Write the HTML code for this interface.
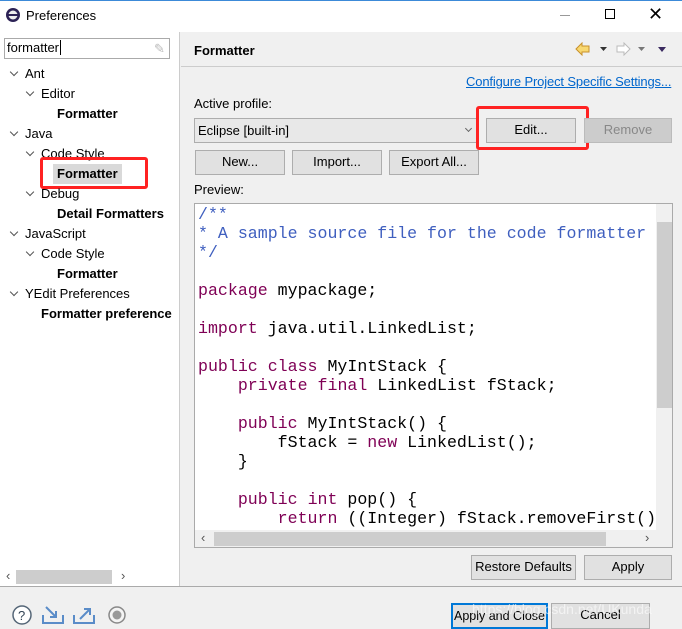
<!DOCTYPE html><html><head><style>
*{margin:0;padding:0;box-sizing:border-box}
html,body{width:682px;height:629px;overflow:hidden}
body{background:#f0f0f0;font-family:"Liberation Sans","Noto Sans CJK SC",sans-serif;font-size:13px;color:#000;position:relative}
.a{position:absolute}
.btn{position:absolute;background:#e1e1e1;border:1px solid #adadad;text-align:center;line-height:22px;font-size:13px;white-space:nowrap;overflow:hidden}
.t{position:absolute;font-size:13px;white-space:nowrap}
.b{font-weight:bold}
.chev{position:absolute;width:6px;height:6px;border-right:1.3px solid #555;border-bottom:1.3px solid #555;transform:rotate(45deg)}
pre{font-family:"Liberation Mono",monospace;font-size:16.6px;line-height:19px;color:#000}
.k{color:#7f0055}
.c{color:#3f5fbf}
</style></head><body>
<div class="a" style="left:0;top:0;width:682px;height:32px;background:#fff;border-top:1px solid #3c8ad8"></div>
<svg class="a" style="left:5px;top:7px" width="16" height="16"><circle cx="8" cy="8" r="7" fill="#2c2255"/><circle cx="8" cy="8" r="4.5" fill="#eee"/><rect x="3" y="7" width="10" height="2" fill="#2c2255"/></svg>
<div class="t" style="left:26px;top:8px">Preferences</div>
<div class="a" style="left:560px;top:15px;width:10px;height:1px;background:#999"></div>
<div class="a" style="left:605px;top:9px;width:10px;height:10px;border:1px solid #000"></div>
<div class="t" style="left:648px;top:4px;font-size:18px">✕</div>
<!-- left -->
<div class="a" style="left:0;top:32px;width:180px;height:555px;background:#fff;border-right:1px solid #ccc"></div>
<div class="a" style="left:4px;top:38px;width:166px;height:21px;border:1px solid #aaa;background:#fff"></div>
<div class="t" style="left:7px;top:40px">formatter<span style="border-left:1px solid #000;margin-left:1px"></span></div>
<div class="t" style="left:154px;top:41px;color:#bbb">✎</div>
<div class="chev" style="left:11px;top:69px"></div><div class="t" style="left:25px;top:66px">Ant</div>
<div class="chev" style="left:27px;top:89px"></div><div class="t" style="left:41px;top:86px">Editor</div>
<div class="t b" style="left:57px;top:106px">Formatter</div>
<div class="chev" style="left:11px;top:129px"></div><div class="t" style="left:25px;top:126px">Java</div>
<div class="chev" style="left:27px;top:149px"></div><div class="t" style="left:41px;top:146px">Code Style</div>
<div class="a" style="left:53px;top:164px;width:69px;height:20px;background:#d9d9d9"></div>
<div class="t b" style="left:57px;top:166px">Formatter</div>
<div class="a" style="left:40px;top:157px;width:108px;height:32px;border:3px solid #f22;border-radius:3px"></div>
<div class="chev" style="left:27px;top:189px"></div><div class="t" style="left:41px;top:186px">Debug</div>
<div class="t b" style="left:57px;top:206px">Detail Formatters</div>
<div class="chev" style="left:11px;top:229px"></div><div class="t" style="left:25px;top:226px">JavaScript</div>
<div class="chev" style="left:27px;top:249px"></div><div class="t" style="left:41px;top:246px">Code Style</div>
<div class="t b" style="left:57px;top:266px">Formatter</div>
<div class="chev" style="left:11px;top:289px"></div><div class="t" style="left:25px;top:286px">YEdit Preferences</div>
<div class="t b" style="left:41px;top:306px">Formatter preference</div>
<div class="a" style="left:16px;top:570px;width:96px;height:14px;background:#cdcdcd"></div>
<div class="t" style="left:6px;top:568px;color:#555">‹</div><div class="t" style="left:121px;top:568px;color:#555">›</div>
<!-- right header -->
<div class="a" style="left:181px;top:66px;width:501px;height:1px;background:#ccc"></div>
<div class="t b" style="left:194px;top:43px">Formatter</div>
<svg class="a" style="left:574px;top:42px" width="100" height="14"><path d="M2 7 L8 1 V4 H15 V10 H8 V13 Z" fill="#f8d870" stroke="#c8902a"/><path d="M26 5 h7 l-3.5 4z" fill="#333"/><path d="M56 7 L50 1 V4 H43 V10 H50 V13 Z" fill="#fff" stroke="#bbb"/><path d="M64 5 h7 l-3.5 4z" fill="#777"/><path d="M84 5 h8 l-4 5z" fill="#3a2a60"/></svg>
<div class="t" style="left:466px;top:74px;color:#0066cc;text-decoration:underline;letter-spacing:-0.15px">Configure Project Specific Settings...</div>
<div class="t" style="left:194px;top:96px">Active profile:</div>
<div class="a" style="left:194px;top:118px;width:285px;height:25px;border:1px solid #adadad;background:#e8e8e8"></div>
<div class="t" style="left:198px;top:123px">Eclipse [built-in]</div>
<div class="chev" style="left:466px;top:126px;width:5px;height:5px;border-color:#666"></div>
<div class="btn" style="left:486px;top:118px;width:90px;height:25px">Edit...</div>
<div class="a" style="left:476px;top:106px;width:113px;height:44px;border:3px solid #f22;border-radius:3px"></div>
<div class="btn" style="left:584px;top:118px;width:88px;height:25px;color:#888;background:#ccc;border-color:#bbb">Remove</div>
<div class="btn" style="left:195px;top:150px;width:90px;height:25px">New...</div>
<div class="btn" style="left:292px;top:150px;width:90px;height:25px">Import...</div>
<div class="btn" style="left:389px;top:150px;width:90px;height:25px">Export All...</div>
<div class="t" style="left:194px;top:182px">Preview:</div>
<!-- code -->
<div class="a" style="left:194px;top:203px;width:479px;height:345px;border:1px solid #aaa;background:#fff;overflow:hidden">
<pre class="a" style="left:3px;top:1px">
<span class="c">/**
* A sample source file for the code formatter
*/</span>

<span class="k">package</span> mypackage;

<span class="k">import</span> java.util.LinkedList;

<span class="k">public</span> <span class="k">class</span> MyIntStack {
    <span class="k">private</span> <span class="k">final</span> LinkedList fStack;

    <span class="k">public</span> MyIntStack() {
        fStack = <span class="k">new</span> LinkedList();
    }

    <span class="k">public</span> <span class="k">int</span> pop() {
        <span class="k">return</span> ((Integer) fStack.removeFirst()
</pre>
<div class="a" style="left:461px;top:0;width:17px;height:326px;background:#f0f0f0"></div>
<div class="a" style="left:462px;top:18px;width:15px;height:186px;background:#cdcdcd"></div>
<div class="a" style="left:0;top:326px;width:478px;height:18px;background:#f0f0f0"></div>
<div class="a" style="left:19px;top:328px;width:392px;height:14px;background:#cdcdcd"></div>
<div class="t" style="left:6px;top:326px;color:#555">‹</div><div class="t" style="left:450px;top:326px;color:#555">›</div>
</div>
<div class="btn" style="left:471px;top:555px;width:105px;height:25px">Restore Defaults</div>
<div class="btn" style="left:584px;top:555px;width:88px;height:25px">Apply</div>
<!-- bottom -->
<div class="a" style="left:0;top:586px;width:682px;height:1px;background:#aaa"></div>
<svg class="a" style="left:10px;top:603px" width="120" height="24"><circle cx="12" cy="12" r="9" fill="#fff" stroke="#567" stroke-width="1.5"/><text x="8" y="17" font-size="13" font-family="Liberation Sans" fill="#345">?</text><path d="M33 12 v8 h20 v-8" fill="none" stroke="#5a8cc8" stroke-width="2"/><path d="M36 4 l10 10 M46 8 v6 h-6" fill="none" stroke="#5a8cc8" stroke-width="2"/><path d="M64 12 v8 h20 v-8" fill="none" stroke="#5a8cc8" stroke-width="2"/><path d="M70 16 l10 -10 M74 6 h6 v6" fill="none" stroke="#5a8cc8" stroke-width="2"/><circle cx="107" cy="12" r="8" fill="#f4f4f4" stroke="#888" stroke-width="1.5"/><circle cx="107" cy="12" r="4.5" fill="#999"/></svg>
<div class="btn" style="left:451px;top:603px;width:97px;height:26px;border:2px solid #0078d7;line-height:22px;font-size:12.5px">Apply and Close</div>
<div class="btn" style="left:551px;top:603px;width:99px;height:26px">Cancel</div>
<div class="t" style="left:472px;top:601px;color:rgba(255,255,255,.6);font-size:14px">https://blog.csdn.net/UKunda</div>
</body></html>
